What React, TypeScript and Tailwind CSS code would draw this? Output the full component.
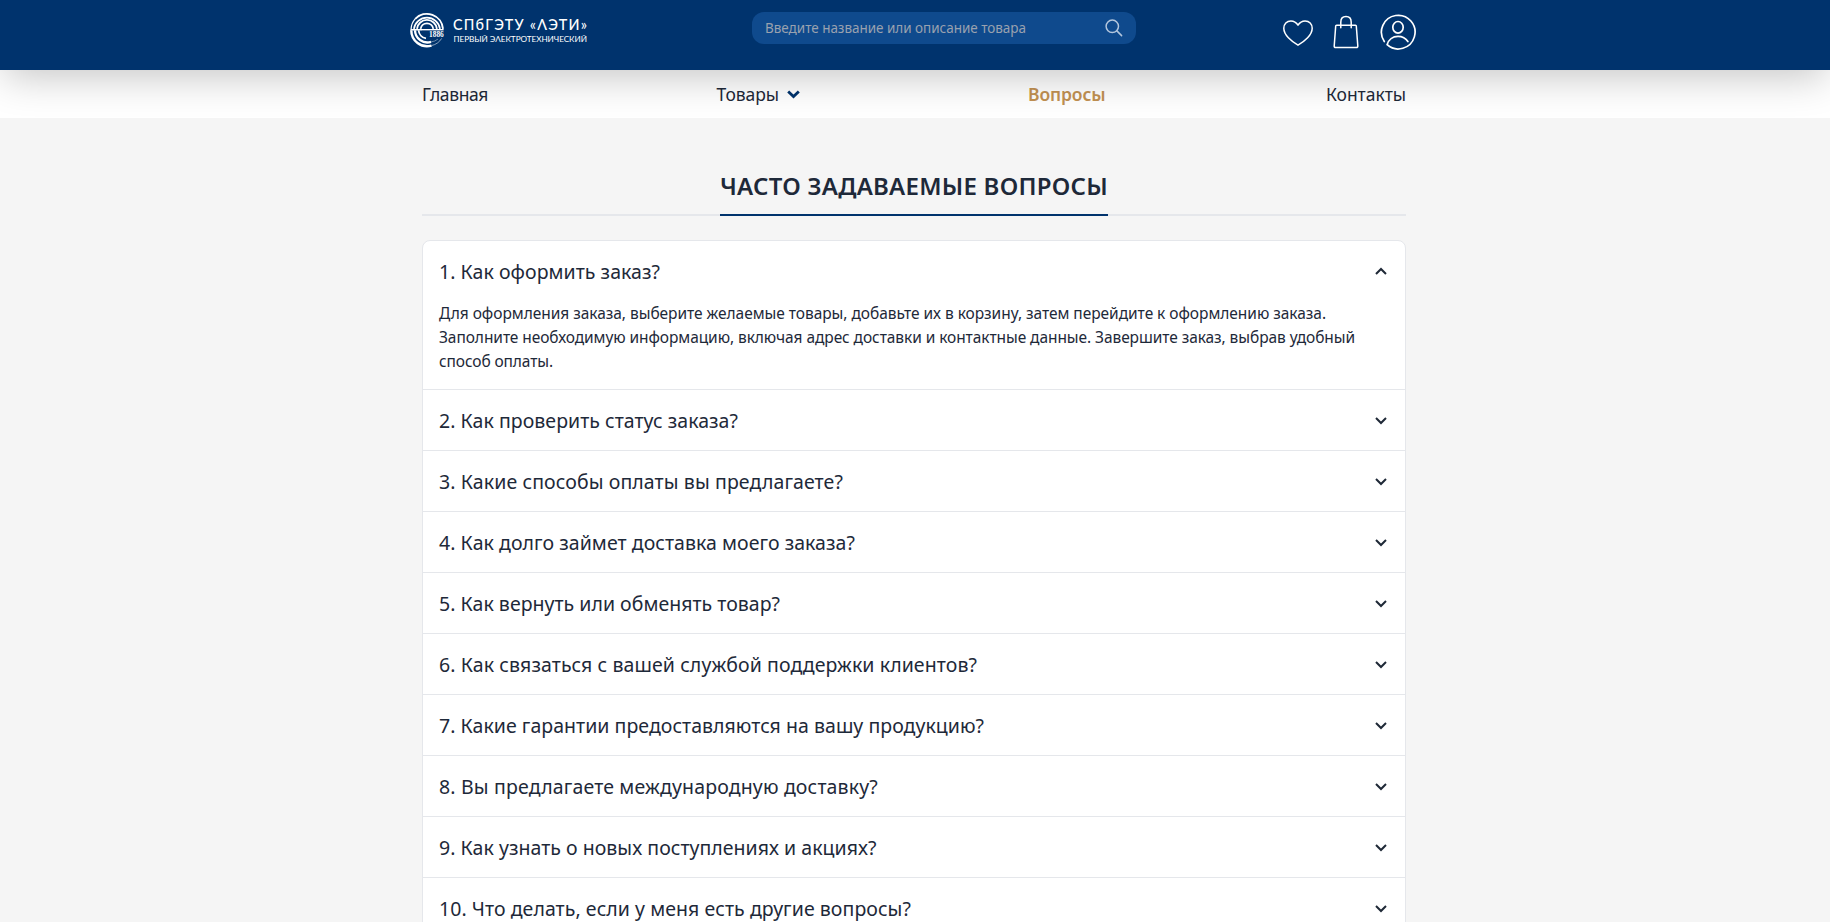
import React, { useState } from "react";

const questions = [
  { title: "1. Как оформить заказ?", tracking: "tracking-[0.041px]" },
  { title: "2. Как проверить статус заказа?", tracking: "tracking-[0.037px]" },
  { title: "3. Какие способы оплаты вы предлагаете?", tracking: "tracking-[0.096px]" },
  { title: "4. Как долго займет доставка моего заказа?", tracking: "tracking-[0.052px]" },
  { title: "5. Как вернуть или обменять товар?", tracking: "tracking-[0.022px]" },
  { title: "6. Как связаться с вашей службой поддержки клиентов?", tracking: "tracking-[0.085px]" },
  { title: "7. Какие гарантии предоставляются на вашу продукцию?", tracking: "tracking-[0.034px]" },
  { title: "8. Вы предлагаете международную доставку?", tracking: "tracking-[0.159px]" },
  { title: "9. Как узнать о новых поступлениях и акциях?", tracking: "tracking-[0.033px]" },
  { title: "10. Что делать, если у меня есть другие вопросы?", tracking: "tracking-[0.057px]" },
];

function Logo() {
  return (
    <svg width="178" height="36" viewBox="0 0 178 36" className="shrink-0" aria-label="СПбГЭТУ «ЛЭТИ»">
      <g fill="none" stroke="#fff">
        <path d="M5.2 6.8A16.2 16.2 0 0 1 33 16.9" strokeWidth="1.9" />
        <path d="M1.1 16.9A15.8 15.8 0 0 1 5.2 6.8" strokeWidth="1.2" />
        <path d="M3.9 16.9A13.2 13.2 0 0 1 30 16.9" strokeWidth="1.8" />
        <path d="M7 16.9A10 10 0 0 1 26.9 16.9" strokeWidth="1.8" />
        <path d="M10.6 16.9A6.4 6.4 0 0 1 23.3 16.9" strokeWidth="1.8" />
        <path d="M0.4 17.8H33.6" strokeWidth="1.5" />
        <path d="M1.3 18.2A15.8 15.8 0 0 0 21.5 33.6" strokeWidth="2.4" />
        <path d="M5 18.2A12.4 12.4 0 0 0 21 29.9" strokeWidth="2.3" />
        <path d="M8.6 18.2A9 9 0 0 0 16 26.4" strokeWidth="1.8" />
        <path d="M21.5 33.6A16 16 0 0 0 31.8 26.2" strokeWidth=".9" opacity=".6" />
        <path d="M21 29.9A12.6 12.6 0 0 0 28 27" strokeWidth=".8" opacity=".5" />
      </g>
      <path d="M12 18.8H34V26.2H17.4C14.6 24.1 12.7 21.7 12 18.8Z" fill="#00336d" />
      <text x="19" y="25" textLength="14.8" lengthAdjust="spacingAndGlyphs" fill="#fff" fontSize="8" fontWeight="700" fontFamily="Liberation Serif, serif">
        1886
      </text>
      <text x="43" y="17.6" textLength="134" fill="#fff" fontSize="14.4" fontWeight="500" fontFamily="Lato, sans-serif">
        СПбГЭТУ «ΛЭТИ»
      </text>
      <text x="43.6" y="29.8" textLength="133.4" fill="#fff" fontSize="8.2" fontWeight="400" fontFamily="Lato, sans-serif">
        ПЕРВЫЙ ЭΛЕКТРОТЕХНИЧЕСКИЙ
      </text>
    </svg>
  );
}

function SearchIcon() {
  return (
    <svg width="18" height="18" viewBox="0 0 18 18" fill="none" stroke="#b3c6dd" strokeWidth="1.5" strokeLinecap="round">
      <circle cx="7.3" cy="7.3" r="6.2" />
      <path d="M11.9 11.9 16.6 16.6" />
    </svg>
  );
}

function HeartIcon() {
  return (
    <svg width="32" height="28" viewBox="0 0 32 28" fill="none" stroke="#fff" strokeWidth="1.5" strokeLinejoin="round">
      <path d="M16 26.2C14.6 25.4 10 22.6 6.4 18.8C3.2 15.4 1.8 12.6 1.8 9.3C1.8 5 4.8 2 8.9 2C12 2 14.4 3.6 16 6.2C17.6 3.6 20 2 23.1 2C27.2 2 30.2 5 30.2 9.3C30.2 12.6 28.8 15.4 25.6 18.8C22 22.6 17.4 25.4 16 26.2Z" />
    </svg>
  );
}

function BagIcon() {
  return (
    <svg width="26" height="34" viewBox="0 0 26 34" fill="none" stroke="#fff" strokeWidth="1.5" strokeLinejoin="round" strokeLinecap="round">
      <path d="M3.6 10.2H22.4C22.9 10.2 23.3 10.5 23.3 11L24.8 31C24.9 32 24.3 32.5 23.4 32.5H2.6C1.7 32.5 1.1 32 1.2 31L2.7 11C2.7 10.5 3.1 10.2 3.6 10.2Z" />
      <path d="M7.8 12.8V7.2C7.8 3.8 9.8 1.6 13 1.6S18.2 3.8 18.2 7.2V12.8" />
    </svg>
  );
}

function UserIcon() {
  return (
    <svg width="36" height="36" viewBox="0 0 36 36" fill="none" stroke="#fff" strokeWidth="1.7" strokeLinecap="round">
      <path d="M4.3 27.5A16.8 16.8 0 1 1 7.1 30.7C8.5 25.6 12.8 22.3 18 22.3C22.2 22.3 25.8 24.2 27.9 27.5" />
      <ellipse cx="18" cy="13.3" rx="5.2" ry="5.8" />
    </svg>
  );
}

function Chevron({ open }: { open: boolean }) {
  return (
    <svg width="24" height="24" viewBox="0 0 24 24" fill="#1f2937" className={open ? "-mr-1 mt-px rotate-180" : "-mr-1 -mt-px"}>
      <path d="M16.293 9.293 12 13.586 7.707 9.293l-1.414 1.414L12 16.414l5.707-5.707z" />
    </svg>
  );
}

export default function App() {
  const [opened, setOpened] = useState(0);

  return (
    <div className="h-[922px] overflow-hidden bg-[#f4f4f4] font-['Noto_Sans',sans-serif] text-gray-800">
      <header className="relative z-10 h-[70px] bg-[#00336d] shadow-[0_10px_40px_-4px_rgba(0,0,0,0.24)]">
        <div className="ml-[410px] flex w-[1006px] items-start justify-between">
          <div className="w-[342px] pt-3">
            <Logo />
          </div>
          <div className="mt-3 flex h-8 w-96 items-center justify-between rounded-xl bg-[#0f4a8d] px-[13px]">
            <span className="text-[13.5px] leading-5 tracking-[-0.029px] text-gray-400">Введите название или описание товара</span>
            <SearchIcon />
          </div>
          <div className="flex w-[280px] items-start justify-end pt-[14px]">
            <span className="mr-[19px] pt-[5px]"><HeartIcon /></span>
            <span className="mr-[21px] pt-[1px]"><BagIcon /></span>
            <UserIcon />
          </div>
        </div>
      </header>

      <nav className="h-12 bg-white pr-[2px]">
        <div className="mx-auto flex h-12 w-[984px] items-center text-[17.5px] leading-7">
          <a className="w-[294.5px] tracking-[-0.4px]">Главная</a>
          <a className="flex w-[311.5px] items-center gap-2">
            <span className="tracking-[-0.058px]">Товары</span>
            <svg width="13" height="9" viewBox="0 0 13 9" fill="none" stroke="#00336d" strokeWidth="2.8">
              <path d="M1.2 1.4 6.5 6.5 11.8 1.4" />
            </svg>
          </a>
          <a className="font-semibold tracking-[-0.1px] text-[#c29152]">Вопросы</a>
          <a className="ml-auto tracking-[-0.038px]">Контакты</a>
        </div>
      </nav>

      <main className="relative z-20 bg-neutral-100 pr-[2px]">
        <div className="mx-auto w-[984px] pt-12">
          <div className="flex justify-center border-b-2 border-gray-200">
            <h1 className="-mb-[2px] border-b-2 border-[#00336d] pt-[3px] pb-[11px] text-2xl leading-[34px] font-semibold tracking-[0.272px] whitespace-nowrap">
              ЧАСТО ЗАДАВАЕМЫЕ ВОПРОСЫ
            </h1>
          </div>

          <div className="mt-6 rounded-t-lg border border-gray-200 bg-white">
            {questions.map((q, i) => (
              <section key={q.title} className="border-b border-gray-200">
                <button
                  onClick={() => setOpened(opened === i ? -1 : i)}
                  className="flex h-[60px] w-full items-center justify-between px-4 text-left"
                >
                  <span className={`pt-[2px] text-[19.5px] leading-7 whitespace-nowrap ${q.tracking}`}>{q.title}</span>
                  <Chevron open={opened === i} />
                </button>
                {i === 0 && opened === 0 && (
                  <p className="h-[88px] px-4 text-[15.5px] leading-6 whitespace-nowrap">
                    <span className="block tracking-[-0.038px]">
                      Для оформления заказа, выберите желаемые товары, добавьте их в корзину, затем перейдите к оформлению заказа.
                    </span>
                    <span className="block tracking-[-0.075px]">
                      Заполните необходимую информацию, включая адрес доставки и контактные данные. Завершите заказ, выбрав удобный
                    </span>
                    <span className="block tracking-[-0.108px]">способ оплаты.</span>
                  </p>
                )}
              </section>
            ))}
          </div>
        </div>
      </main>
    </div>
  );
}
